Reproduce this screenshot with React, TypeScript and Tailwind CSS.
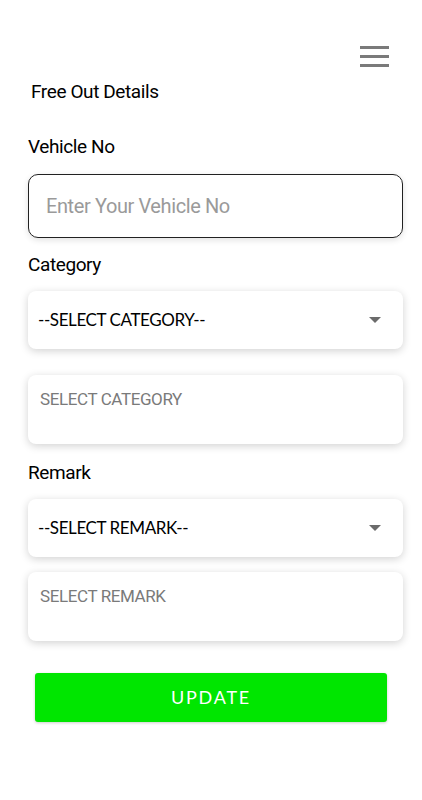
import { useState } from "react";

const narrow = { fontFamily: '"Roboto", "Liberation Sans", sans-serif', letterSpacing: "-0.4px" };
const round = { fontFamily: '"Lato", "Noto Sans", sans-serif' };

function Caret() {
  return (
    <svg width="12" height="7" viewBox="0 0 12 7" className="shrink-0">
      <path d="M0 0h12L6 6z" fill="#6b6b6b" />
    </svg>
  );
}

function SelectCard({ label }: { label: string }) {
  return (
    <div className="h-[58px] rounded-lg bg-white shadow-[0_2px_8px_rgba(0,0,0,0.18)] flex items-center justify-between pl-[10px] pr-[22px]">
      <span className="text-[17px] text-black" style={round}>{label}</span>
      <Caret />
    </div>
  );
}

function NoteCard({ placeholder, value, onChange }: { placeholder: string; value: string; onChange: (v: string) => void }) {
  return (
    <textarea
      value={value}
      onChange={(e) => onChange(e.target.value)}
      placeholder={placeholder}
      className="h-[69px] w-full resize-none rounded-lg bg-white shadow-[0_2px_8px_rgba(0,0,0,0.18)] px-3 pt-[14px] text-[17px] leading-5 text-black placeholder:text-[#7a7a7a] outline-none"
      style={narrow}
    />
  );
}

export default function App() {
  const [vehicle, setVehicle] = useState("");
  const [catNote, setCatNote] = useState("");
  const [remNote, setRemNote] = useState("");

  return (
    <main className="w-[422px] h-[800px] bg-white flex flex-col pl-[28px] pr-[19px]" style={narrow}>
      <div className="flex justify-end pt-[46px] pr-[14px]">
        <button className="w-[29px] flex flex-col gap-[6px]">
          <span className="h-[3px] bg-[#7a7a7a]" />
          <span className="h-[3px] bg-[#7a7a7a]" />
          <span className="h-[3px] bg-[#7a7a7a]" />
        </button>
      </div>

      <h1 className="mt-[13px] pl-[3px] text-[19px] leading-6 text-black">Free Out Details</h1>

      <div className="mt-[31px] text-[19px] leading-6 text-black">Vehicle No</div>
      <input
        value={vehicle}
        onChange={(e) => setVehicle(e.target.value)}
        placeholder="Enter Your Vehicle No"
        className="mt-[15px] h-[64px] rounded-[10px] border border-[#222] px-[17px] text-[20px] text-black placeholder:text-[#9a9a9a] outline-none shadow-[0_2px_6px_rgba(0,0,0,0.12)]"
        style={narrow}
      />

      <div className="mt-[15px] text-[19px] leading-6 text-black">Category</div>
      <div className="mt-[14px]"><SelectCard label="--SELECT CATEGORY--" /></div>
      <div className="mt-[26px]"><NoteCard placeholder="SELECT CATEGORY" value={catNote} onChange={setCatNote} /></div>

      <div className="mt-[10px] text-[19px] leading-6 text-black">Remark</div>
      <div className="mt-[14px]"><SelectCard label="--SELECT REMARK--" /></div>
      <div className="mt-[15px]"><NoteCard placeholder="SELECT REMARK" value={remNote} onChange={setRemNote} /></div>

      <button
        className="mt-[25px] ml-[7px] mr-[16px] h-[49px] rounded-[3px] bg-[#00e600] text-white text-[18px] tracking-[0.1em] shadow-[0_1px_3px_rgba(0,0,0,0.2)]"
        style={round}
      >
        UPDATE
      </button>
    </main>
  );
}
